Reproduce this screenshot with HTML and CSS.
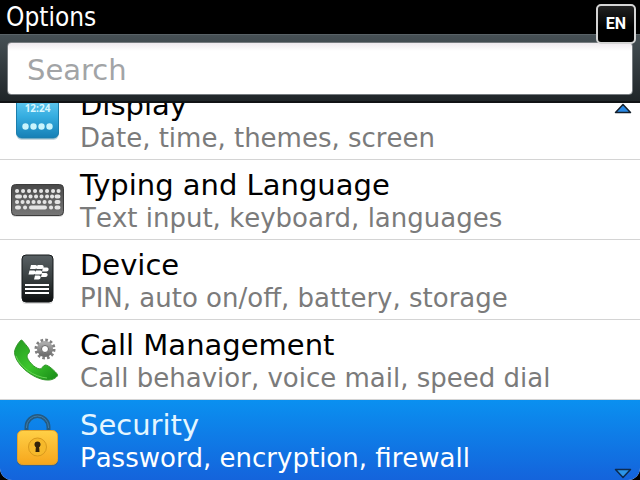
FILE: index.html
```
<!DOCTYPE html>
<html lang="en">
<head>
<meta charset="utf-8">
<meta name="viewport" content="width=device-width, initial-scale=1">
<title>Options</title>
<link rel="stylesheet" href="styles.css">
</head>
<body>
<div class="screen">
  <header class="titlebar">
    <h1 class="title">Options</h1>
    <span class="lang">EN</span>
  </header>
  <form class="searchbar">
    <input class="search" type="text" placeholder="Search" aria-label="Search">
  </form>
  <main class="panel">
    <nav class="list">
      <a class="row" href="#display">
        <svg class="icon" viewBox="0 0 56 56" aria-hidden="true">
          <defs>
            <linearGradient id="blue" x1="0" y1="0" x2="0" y2="1"><stop offset="0" stop-color="#6fd0f5"/><stop offset=".5" stop-color="#35ade0"/><stop offset="1" stop-color="#167fb5"/></linearGradient>
          </defs>
          <rect x="7.500" y="5" width="42" height="43" rx="5" fill="#c9d8df"/>
          <rect x="7.500" y="3" width="42" height="43" rx="5" fill="url(#blue)" stroke="#1c7eac"/>
          <text class="clock" x="28.500" y="20" text-anchor="middle">12:24</text>
          <g fill="#c9f4fc"><circle cx="16.500" cy="34.500" r="3.200"/><circle cx="24.500" cy="34.500" r="3.200"/><circle cx="32.500" cy="34.500" r="3.200"/><circle cx="40.500" cy="34.500" r="3.200"/></g>
        </svg>
        <span class="text"><span class="name">Display</span><span class="detail">Date, time, themes, screen</span></span>
      </a>
      <a class="row" href="#typing">
        <svg class="icon" viewBox="0 0 56 56" aria-hidden="true">
          <defs>
            <linearGradient id="keys" x1="0" y1="0" x2="0" y2="1"><stop offset="0" stop-color="#484848"/><stop offset="1" stop-color="#777"/></linearGradient>
          </defs>
          <rect x="2.500" y="14" width="52" height="31" rx="4" fill="#ddd"/>
          <rect x="2.500" y="12.500" width="52" height="31" rx="4" fill="url(#keys)" stroke="#3d3d3d"/>
          <g stroke="#e4e4e4" stroke-width="4" stroke-linecap="round">
            <path d="M8 19h.1M14 19h.1M20 19h.1M26 19h.1M32 19h.1M38 19h.1M44 19h.1M49.500 19h.1"/>
            <path d="M8 24.500h3M16 24.500h.1M21.500 24.500h.1M27 24.500h.1M32.500 24.500h.1M38 24.500h.1M43 24.500h.1M47.500 24.500h2"/>
            <path d="M8 30h.1M13.500 30h.1M19 30h.1M24.500 30h.1M30 30h.1M35.500 30h.1M41 30h.1M47.500 30h2"/>
            <path d="M8 35.500h2M16 35.500h.1M22 35.500h14M42 35.500h.1M47.500 35.500h2"/>
          </g>
        </svg>
        <span class="text"><span class="name">Typing and Language</span><span class="detail">Text input, keyboard, languages</span></span>
      </a>
      <a class="row" href="#device">
        <svg class="icon" viewBox="0 0 56 56" aria-hidden="true">
          <defs>
            <linearGradient id="body" x1="0" y1="0" x2="0" y2="1"><stop offset="0" stop-color="#596164"/><stop offset=".55" stop-color="#343a3b"/><stop offset="1" stop-color="#0c0e0e"/></linearGradient>
          </defs>
          <rect x="13" y="5" width="31" height="47" rx="4" fill="#ddd"/>
          <rect x="13" y="3" width="31" height="47" rx="4" fill="url(#body)" stroke="#15191a"/>
          <g fill="#fff">
            <path d="M22 13h4.500c2.500 0 2 4-.5 4h-5zM28.500 13h4.500c2.500 0 2 4-.5 4h-5zM20.500 18.500h4.500c2.500 0 2 4-.5 4h-5zM27 18.500h4.500c2.500 0 2 4-.5 4h-5zM34 15.500h4c2.500 0 2 4-.5 4h-4.500zM33 21h4c2.500 0 2 4-.5 4h-4.500zM26 23.500h4c2.500 0 2 4-.5 4h-4.500z"/>
            <path d="M16 32h24v2H16zM16 36h24v2H16zM16 40h24v2H16z"/>
          </g>
        </svg>
        <span class="text"><span class="name">Device</span><span class="detail">PIN, auto on/off, battery, storage</span></span>
      </a>
      <a class="row" href="#calls">
        <svg class="icon" viewBox="0 0 56 56" aria-hidden="true">
          <defs>
            <linearGradient id="green" x1="0" y1="0" x2="1" y2="1"><stop offset="0" stop-color="#249a20"/><stop offset=".5" stop-color="#3cc52c"/><stop offset="1" stop-color="#178a17"/></linearGradient>
            <linearGradient id="gear" x1="0" y1="0" x2="0" y2="1"><stop offset="0" stop-color="#aaa"/><stop offset="1" stop-color="#707070"/></linearGradient>
          </defs>
          <path d="M11.500 8.500c1-1 2 0 3.500 2 2 2.500 5.500 6 5.500 8.500s-2.500 3-2.500 5c0 4 7.500 12.500 13 13 2 .2 3-4 5.500-4 3 0 10 6.500 12 9.500 1 2-4.500 5.500-8.500 5.500-13 1-33.500-14-34.500-27.500 0-4 4-10 6-12z" fill="url(#green)" stroke="#37972f"/>
          <path d="M7 24c4 11 18 21 31 22" fill="none" stroke="#66d354" stroke-width="1"/>
          <circle cx="36" cy="17" r="8.500" fill="none" stroke="#808080" stroke-width="4" stroke-dasharray="2.450 2"/>
          <circle cx="36" cy="17" r="5.500" fill="none" stroke="url(#gear)" stroke-width="5"/>
          <circle cx="36" cy="17" r="3.500" fill="#fff" stroke="#666" stroke-width="1"/>
        </svg>
        <span class="text"><span class="name">Call Management</span><span class="detail">Call behavior, voice mail, speed dial</span></span>
      </a>
      <a class="row selected" href="#security" aria-current="true">
        <svg class="icon" viewBox="0 0 56 56" aria-hidden="true">
          <defs>
            <linearGradient id="gold" x1="0" y1="0" x2="0" y2="1"><stop offset="0" stop-color="#ffd047"/><stop offset="1" stop-color="#f6a61c"/></linearGradient>
          </defs>
          <path d="M17.500 20V15a11 11 0 0 1 22 0V20" fill="none" stroke="#245a82" stroke-width="4"/>
          <path d="M17.500 16V15a11 11 0 0 1 22 0V16" fill="none" stroke="#3f7da8" stroke-width="1"/>
          <rect x="8" y="20" width="41" height="34" rx="5" fill="#34659a"/>
          <rect x="8.500" y="18.500" width="40" height="34" rx="5" fill="url(#gold)" stroke="#e3a32b"/>
          <circle cx="28.500" cy="35" r="9" fill="#f6b92b" stroke="#d9991c"/>
          <circle cx="28.500" cy="32.500" r="3" fill="#33230a"/>
          <path d="M27 33h3l.5 7h-4z" fill="#33230a"/>
        </svg>
        <span class="text"><span class="name">Security</span><span class="detail">Password, encryption, firewall</span></span>
      </a>
    </nav>
    <svg class="arrow up" viewBox="0 0 18 11" aria-hidden="true"><path d="M9 1.500L16.500 9.500h-15z" fill="#2a8ae6" stroke="#14202c" stroke-width="1.500" stroke-linejoin="round"/></svg>
    <svg class="arrow down" viewBox="0 0 18 11" aria-hidden="true"><path d="M9 9.500L16.500 1.500h-15z" fill="#2c96e8" stroke="#0d2b50" stroke-width="1.500" stroke-linejoin="round"/></svg>
  </main>
</div>
</body>
</html>
```
FILE: styles.css
```
* {
  box-sizing: border-box;
}

body {
  margin: 0;
  background: #000;
  font-family: "DejaVu Sans", sans-serif;
}

.screen {
  display: flex;
  flex-direction: column;
  height: 100vh;
}

.titlebar {
  position: relative;
  flex: none;
  padding: 1px 6px;
  background: #000;
}

.title {
  margin: 0;
  color: #fff;
  font-family: "DejaVu Sans Condensed", "DejaVu Sans", sans-serif;
  font-size: 26px;
  font-weight: 400;
  line-height: 32px;
}

.lang {
  position: absolute;
  top: 4px;
  right: 4px;
  width: 40px;
  height: 40px;
  border: 2px solid #d4d4d4;
  border-radius: 5px;
  background: linear-gradient(#222, #000 60%);
  color: #fff;
  font-family: "Liberation Sans Narrow", Roboto, sans-serif;
  font-size: 16px;
  font-weight: 700;
  line-height: 36px;
  text-align: center;
}

.searchbar {
  flex: none;
  margin: 0;
  padding: 7px 7px 6px;
  border-top: 1px solid #596267;
  border-bottom: 2px solid #101315;
  background: linear-gradient(#465055, #1f2528);
}

.search {
  display: block;
  width: 100%;
  height: 53px;
  padding: 2px 19px 0;
  border: 1px solid #777c80;
  border-radius: 4px;
  background: linear-gradient(#eee9ee, #fff 8px);
  color: #222;
  font: 29px "DejaVu Sans", sans-serif;
}

.search::placeholder {
  color: #a2a4a6;
  opacity: 1;
}

.panel {
  position: relative;
  flex: 1;
  min-height: 0;
  overflow: hidden;
  border-radius: 0 0 12px 12px;
  background: #fff;
}

.list {
  display: flex;
  flex-direction: column;
  justify-content: flex-end;
  height: 100%;
}

.row {
  display: flex;
  flex: none;
  align-items: center;
  gap: 15px;
  height: 80px;
  padding: 0 9px;
  border-bottom: 1px solid #d4d4d4;
  color: #000;
  text-decoration: none;
}

.icon {
  flex: none;
  width: 56px;
  height: 56px;
}

.clock {
  fill: #d8f7ff;
  font: 700 10px "Open Sans", sans-serif;
}

.text {
  display: flex;
  flex-direction: column;
  padding-top: 2px;
  white-space: nowrap;
}

.name {
  font-size: 29px;
  line-height: 34px;
}

.detail {
  color: #7b7b7b;
  font-size: 26px;
  font-kerning: none;
  line-height: 32px;
}

.selected {
  border-bottom-color: #1464dc;
  background: linear-gradient(#0a90f0, #1464dc);
  color: #e4f6ff;
}

.selected .detail {
  color: #fff;
}

.arrow {
  position: absolute;
  right: 8px;
  width: 18px;
  height: 11px;
}

.up {
  top: 0;
}

.down {
  bottom: 1px;
}
```
